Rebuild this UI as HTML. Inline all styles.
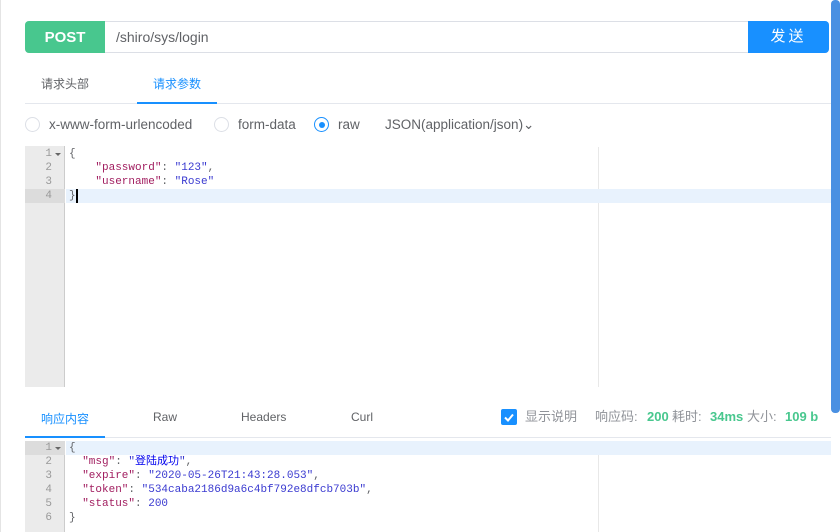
<!DOCTYPE html>
<html><head><meta charset="utf-8"><style>
*{margin:0;padding:0;box-sizing:border-box}
body{width:840px;height:532px;background:#fff;position:relative;overflow:hidden;font-family:"Liberation Sans","Noto Sans CJK SC",sans-serif;font-size:13px;color:#606266}
.a{position:absolute}
.mono{font-family:"Liberation Mono","Noto Sans CJK SC",monospace;font-size:11px;line-height:14px}
.k{color:#a11d5f}.s{color:#3a3ad0}.n{color:#3a3ad0}.cn{color:#0000ee}
.ln{color:#999;text-align:right;width:27px}
.radio{width:15px;height:15px;border:1px solid #dcdfe6;border-radius:50%}
.st{top:409px;font-size:13px;color:#909399;white-space:nowrap;line-height:16px}
.g{color:#48c78e;font-weight:bold}
</style></head><body>
<div class="a" style="left:0;top:0;width:1px;height:532px;background:#e4e4e4"></div>
<div class="a" style="left:25px;top:21px;width:804px;height:32px;border:1px solid #dcdfe6;border-radius:4px"></div>
<div class="a" style="left:25px;top:21px;width:80px;height:32px;background:#48c78e;border-radius:4px 0 0 4px;color:#fff;font-weight:bold;font-size:15px;line-height:34px;text-align:center">POST</div>
<div class="a" style="left:116px;top:21px;line-height:33px;font-size:14px;color:#606266">/shiro/sys/login</div>
<div class="a" style="left:748px;top:21px;width:81px;height:32px;background:#1890ff;border-radius:0 4px 4px 0;color:#fff;font-size:15px;line-height:32px;text-align:center;letter-spacing:3px">发送</div>
<div class="a" style="left:41px;top:75px;font-size:12px;color:#606266">请求头部</div>
<div class="a" style="left:153px;top:75px;font-size:12px;color:#1890ff">请求参数</div>
<div class="a" style="left:25px;top:103px;width:806px;height:1px;background:#e4e7ed"></div>
<div class="a" style="left:137px;top:102px;width:80px;height:2px;background:#1890ff"></div>
<div class="a radio" style="left:25px;top:117px"></div>
<div class="a" style="left:49px;top:117px;font-size:13.5px">x-www-form-urlencoded</div>
<div class="a radio" style="left:214px;top:117px"></div>
<div class="a" style="left:238px;top:117px;font-size:13.5px">form-data</div>
<div class="a radio" style="left:314px;top:117px;border-color:#1890ff"></div>
<div class="a" style="left:318.5px;top:121.5px;width:6px;height:6px;border-radius:50%;background:#1890ff"></div>
<div class="a" style="left:338px;top:117px;font-size:13.5px">raw</div>
<div class="a" style="left:385px;top:117px;font-size:13.5px">JSON(application/json)⌄</div>
<div class="a" style="left:25px;top:146px;width:40px;height:241px;background:#ebebeb;border-right:1px solid #ccc"></div>
<div class="a" style="left:598px;top:147px;width:1px;height:240px;background:#e8e8e8"></div>
<div class="a" style="left:25px;top:189px;width:40px;height:14px;background:#dcdcdc"></div>
<div class="a" style="left:66px;top:189px;width:765px;height:14px;background:#e8f2fd"></div>
<div class="a mono ln" style="left:25px;top:147px">1<br>2<br>3<br>4</div>
<div class="a" style="left:55px;top:153px;border:3px solid transparent;border-top:3px solid #666"></div>
<div class="a mono" style="left:69px;top:147px;white-space:pre">{
    <span class="k">"password"</span>: <span class="s">"123"</span>,
    <span class="k">"username"</span>: <span class="s">"Rose"</span>
}</div>
<div class="a" style="left:76px;top:189px;width:1.5px;height:14px;background:#000"></div>
<div class="a" style="left:41px;top:410px;font-size:12px;color:#1890ff">响应内容</div>
<div class="a" style="left:153px;top:410px;font-size:12px">Raw</div>
<div class="a" style="left:241px;top:410px;font-size:12px">Headers</div>
<div class="a" style="left:351px;top:410px;font-size:12px">Curl</div>
<div class="a" style="left:25px;top:437px;width:806px;height:1px;background:#e4e7ed"></div>
<div class="a" style="left:25px;top:436px;width:80px;height:2px;background:#1890ff"></div>
<div class="a" style="left:501px;top:409px;width:16px;height:16px;background:#1890ff;border-radius:2px"></div>
<svg class="a" style="left:501px;top:409px" width="16" height="16"><path d="M4 8.5l3 3 5-6" stroke="#fff" stroke-width="2" fill="none"/></svg>
<div class="a st" style="left:525px">显示说明</div>
<div class="a st" style="left:595px">响应码:</div>
<div class="a st g" style="left:647px">200</div>
<div class="a st" style="left:672px">耗时:</div>
<div class="a st g" style="left:710px">34ms</div>
<div class="a st" style="left:747px">大小:</div>
<div class="a st g" style="left:785px">109 b</div>
<div class="a" style="left:25px;top:441px;width:40px;height:91px;background:#ebebeb;border-right:1px solid #ccc"></div>
<div class="a" style="left:25px;top:441px;width:40px;height:14px;background:#dcdcdc"></div>
<div class="a" style="left:66px;top:441px;width:765px;height:14px;background:#e8f2fd"></div>
<div class="a" style="left:598px;top:455px;width:1px;height:77px;background:#e8e8e8"></div>
<div class="a mono ln" style="left:25px;top:441px">1<br>2<br>3<br>4<br>5<br>6</div>
<div class="a" style="left:55px;top:447px;border:3px solid transparent;border-top:3px solid #666"></div>
<div class="a mono" style="left:69px;top:441px;white-space:pre">{
  <span class="k">"msg"</span>: <span class="s">"<span class="cn">登陆成功</span>"</span>,
  <span class="k">"expire"</span>: <span class="s">"2020-05-26T21:43:28.053"</span>,
  <span class="k">"token"</span>: <span class="s">"534caba2186d9a6c4bf792e8dfcb703b"</span>,
  <span class="k">"status"</span>: <span class="n">200</span>
}</div>
<div class="a" style="left:831px;top:0;width:9px;height:413px;background:#4a90e2;border-radius:4px"></div>
</body></html>
